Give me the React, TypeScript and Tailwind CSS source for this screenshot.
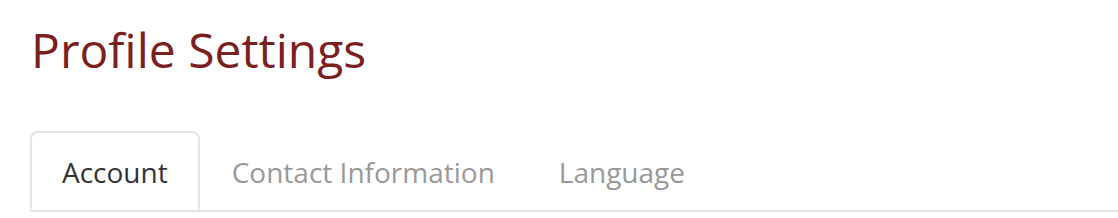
export default function App() {
  return (
    <div className="w-[1118px] h-[218px] bg-white pl-[30px] overflow-hidden" style={{ fontFamily: '"Open Sans", sans-serif' }}>
      <h1 className="text-[48px] leading-[1.1] text-[#7b1f1f] pt-[24px] pl-[1px] font-normal">Profile Settings</h1>
      <ul className="mt-[54px] flex border-b-2 border-[#e3e3e3] text-[28px] leading-[38px]">
        <li className="-mb-[2px]">
          <a className="block px-[30px] pt-[20px] pb-[17px] border-2 border-[#e3e3e3] border-b-transparent bg-white rounded-t-[8px] text-[#333333]">Account</a>
        </li>
        <li>
          <a className="block px-[30px] pt-[20px] pb-[17px] border-2 border-transparent text-[#999999]">Contact Information</a>
        </li>
        <li>
          <a className="block px-[30px] pt-[20px] pb-[17px] border-2 border-transparent text-[#999999]">Language</a>
        </li>
      </ul>
    </div>
  );
}
